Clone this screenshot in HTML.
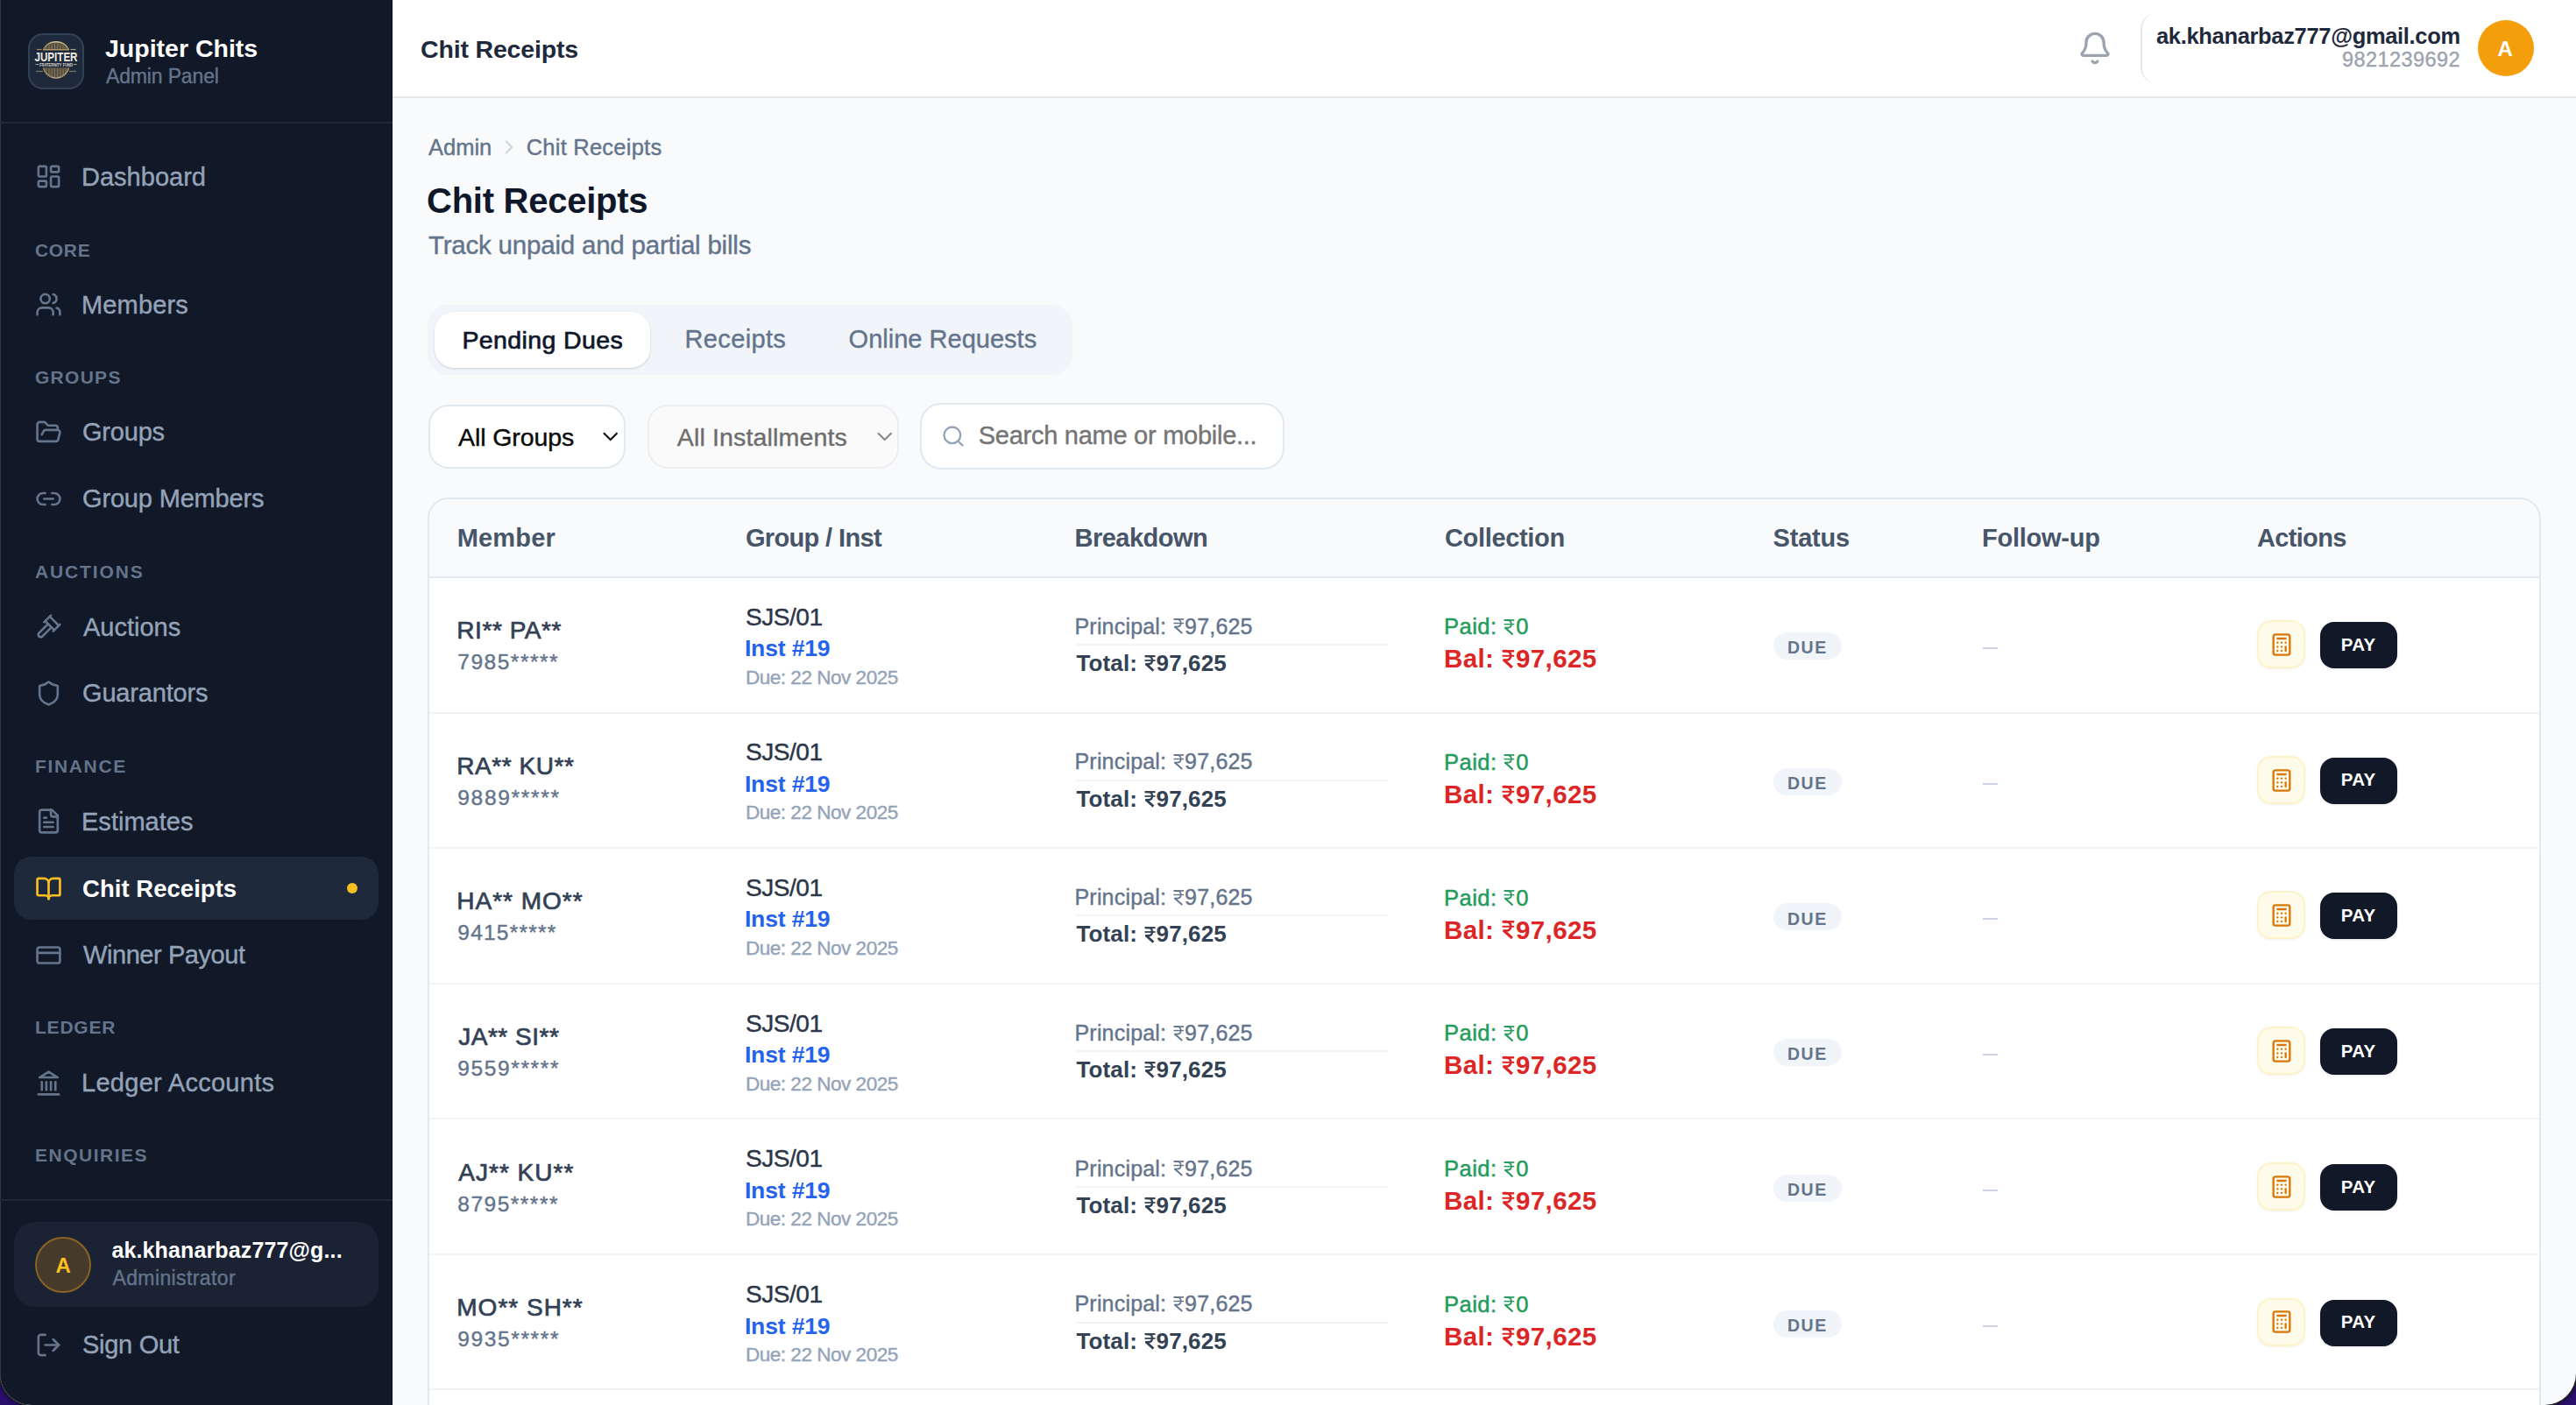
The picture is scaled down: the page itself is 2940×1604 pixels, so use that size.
<!DOCTYPE html><html><head><meta charset="utf-8"><title>Chit Receipts</title><style>

*{margin:0;padding:0;box-sizing:border-box}
html,body{width:2940px;height:1604px;overflow:hidden;background:#2a0f6b}
body{font-family:"Liberation Sans",sans-serif;position:relative}
.t{position:absolute;line-height:1;white-space:pre}
.rs{display:inline-block;width:0.5em;height:0.69em;vertical-align:0;margin:0 0.04em 0 0.01em;overflow:visible}

</style></head><body>
<div style="position:absolute;left:0;top:0;width:2940px;height:1604px;background:#2a0f6b"></div>
<div id="win" style="position:absolute;left:0;top:0;width:2940px;height:1604px;overflow:hidden;border-radius:0 0 36px 36px;background:#f8fafc;box-shadow:0 0 0 1.5px #222, 0 0 4px 2px rgba(0,0,0,0.55)">
<div style="position:absolute;left:0px;top:0px;width:448px;height:1604px;background:#111827"></div>
<div style="position:absolute;left:0px;top:0px;width:1px;height:1604px;background:#2f3748"></div>
<div style="position:absolute;left:447px;top:0px;width:1px;height:1604px;background:#0b1220"></div>
<div style="position:absolute;left:32px;top:38px;width:64px;height:64px;background:#1e293b;border:2px solid #334155;border-radius:17px"></div>
<svg style="position:absolute;left:32px;top:38px" width="64" height="64" viewBox="0 0 64 64">
<defs><linearGradient id="gd" x1="0" x2="1"><stop offset="0" stop-color="#a8824a"/><stop offset="0.5" stop-color="#e8d39c"/><stop offset="1" stop-color="#b39559"/></linearGradient></defs>
<g stroke="#a68b57" stroke-width="0.85" opacity="0.9"><line x1="18.95" y1="17.10" x2="18.95" y2="18.5"/><line x1="20.40" y1="15.43" x2="20.40" y2="18.5"/><line x1="21.85" y1="14.13" x2="21.85" y2="18.5"/><line x1="23.30" y1="13.11" x2="23.30" y2="18.5"/><line x1="24.75" y1="12.30" x2="24.75" y2="18.5"/><line x1="26.20" y1="11.66" x2="26.20" y2="18.5"/><line x1="27.65" y1="11.19" x2="27.65" y2="18.5"/><line x1="29.10" y1="10.86" x2="29.10" y2="18.5"/><line x1="30.55" y1="10.66" x2="30.55" y2="18.5"/><line x1="32.00" y1="10.60" x2="32.00" y2="18.5"/><line x1="33.45" y1="10.66" x2="33.45" y2="18.5"/><line x1="34.90" y1="10.86" x2="34.90" y2="18.5"/><line x1="36.35" y1="11.19" x2="36.35" y2="18.5"/><line x1="37.80" y1="11.66" x2="37.80" y2="18.5"/><line x1="39.25" y1="12.30" x2="39.25" y2="18.5"/><line x1="40.70" y1="13.11" x2="40.70" y2="18.5"/><line x1="42.15" y1="14.13" x2="42.15" y2="18.5"/><line x1="43.60" y1="15.43" x2="43.60" y2="18.5"/><line x1="45.05" y1="17.10" x2="45.05" y2="18.5"/><line x1="18.95" y1="39.3" x2="18.95" y2="42.25"/><line x1="20.40" y1="39.3" x2="20.40" y2="44.43"/><line x1="21.85" y1="39.3" x2="21.85" y2="45.99"/><line x1="23.30" y1="39.3" x2="23.30" y2="47.19"/><line x1="24.75" y1="39.3" x2="24.75" y2="48.11"/><line x1="26.20" y1="39.3" x2="26.20" y2="48.82"/><line x1="27.65" y1="39.3" x2="27.65" y2="49.35"/><line x1="29.10" y1="39.3" x2="29.10" y2="49.71"/><line x1="30.55" y1="39.3" x2="30.55" y2="49.93"/><line x1="32.00" y1="39.3" x2="32.00" y2="50.00"/><line x1="33.45" y1="39.3" x2="33.45" y2="49.93"/><line x1="34.90" y1="39.3" x2="34.90" y2="49.71"/><line x1="36.35" y1="39.3" x2="36.35" y2="49.35"/><line x1="37.80" y1="39.3" x2="37.80" y2="48.82"/><line x1="39.25" y1="39.3" x2="39.25" y2="48.11"/><line x1="40.70" y1="39.3" x2="40.70" y2="47.19"/><line x1="42.15" y1="39.3" x2="42.15" y2="45.99"/><line x1="43.60" y1="39.3" x2="43.60" y2="44.43"/><line x1="45.05" y1="39.3" x2="45.05" y2="42.25"/></g>
<path d="M17.5 18.5 A16.35 16.35 0 0 1 46.5 18.5" fill="none" stroke="url(#gd)" stroke-width="1.4"/>
<path d="M17.5 39.3 A14.86 14.86 0 0 0 46.5 39.3" fill="none" stroke="url(#gd)" stroke-width="1.4"/>
<line x1="10" y1="18.5" x2="15.5" y2="18.5" stroke="#b08a4e" stroke-width="1.2"/>
<line x1="17" y1="18.8" x2="47" y2="18.8" stroke="#c9ad6e" stroke-width="1.2"/>
<line x1="48.5" y1="18.5" x2="54.5" y2="18.5" stroke="#a9a68a" stroke-width="1.2"/>
<line x1="11.5" y1="39.3" x2="56.5" y2="39.3" stroke="url(#gd)" stroke-width="1.3"/>
<rect x="7" y="20.3" width="50" height="12.2" fill="#1e293b"/>
<text x="32" y="32" text-anchor="middle" font-family="Liberation Sans" font-weight="bold" font-size="15" fill="#f1ece2" textLength="49" lengthAdjust="spacingAndGlyphs">JUPITER</text>
<rect x="8" y="33.3" width="48" height="4.6" fill="#1e293b"/>
<line x1="8.5" y1="35.6" x2="12" y2="35.6" stroke="#cfc8bc" stroke-width="0.8"/><line x1="52" y1="35.6" x2="55.5" y2="35.6" stroke="#cfc8bc" stroke-width="0.8"/>
<text x="32" y="37.5" text-anchor="middle" font-family="Liberation Sans" font-weight="bold" font-size="4.8" fill="#dcd6cc" textLength="38" lengthAdjust="spacingAndGlyphs">FRATERNITY FUND</text>
<g fill="#77746c"><rect x="9" y="42.8" width="8" height="1.3"/><rect x="47" y="42.8" width="8" height="1.3"/></g>
<path d="M21 47.5 Q32 53 43 47.5" fill="none" stroke="#5c5f66" stroke-width="0.8"/>
</svg>
<div style="position:absolute;left:0px;top:139px;width:448px;height:2px;background:#1e293b"></div>
<div style="position:absolute;left:16px;top:978px;width:416px;height:72px;background:#1e293b;border-radius:20px"></div>
<svg style="position:absolute;left:39.6px;top:186.4px;" width="31" height="31" viewBox="0 0 24 24" fill="none" stroke="#64748b" stroke-width="2.05" stroke-linecap="round" stroke-linejoin="round"><rect width="7" height="9" x="3" y="3" rx="1"/><rect width="7" height="5" x="14" y="3" rx="1"/><rect width="7" height="9" x="14" y="12" rx="1"/><rect width="7" height="5" x="3" y="16" rx="1"/></svg>
<svg style="position:absolute;left:39.6px;top:332.3px;" width="31" height="31" viewBox="0 0 24 24" fill="none" stroke="#64748b" stroke-width="2.05" stroke-linecap="round" stroke-linejoin="round"><path d="M16 21v-2a4 4 0 0 0-4-4H6a4 4 0 0 0-4 4v2"/><circle cx="9" cy="7" r="4"/><path d="M22 21v-2a4 4 0 0 0-3-3.87"/><path d="M16 3.13a4 4 0 0 1 0 7.75"/></svg>
<svg style="position:absolute;left:39.6px;top:477.70000000000005px;" width="31" height="31" viewBox="0 0 24 24" fill="none" stroke="#64748b" stroke-width="2.05" stroke-linecap="round" stroke-linejoin="round"><path d="m6 14 1.5-2.9A2 2 0 0 1 9.24 10H20a2 2 0 0 1 1.94 2.5l-1.54 6a2 2 0 0 1-1.95 1.5H4a2 2 0 0 1-2-2V5a2 2 0 0 1 2-2h3.9a2 2 0 0 1 1.69.9l.81 1.2a2 2 0 0 0 1.67.9H18a2 2 0 0 1 2 2v2"/></svg>
<svg style="position:absolute;left:39.6px;top:554.1px;" width="31" height="31" viewBox="0 0 24 24" fill="none" stroke="#64748b" stroke-width="2.05" stroke-linecap="round" stroke-linejoin="round"><path d="M9 17H7A5 5 0 0 1 7 7h2"/><path d="M15 7h2a5 5 0 1 1 0 10h-2"/><line x1="8" x2="16" y1="12" y2="12"/></svg>
<svg style="position:absolute;left:39.6px;top:700.3000000000001px;" width="31" height="31" viewBox="0 0 24 24" fill="none" stroke="#64748b" stroke-width="2.05" stroke-linecap="round" stroke-linejoin="round"><path d="m14.5 12.5-8 8a2.119 2.119 0 1 1-3-3l8-8"/><path d="m16 16 6-6"/><path d="m8 8 6-6"/><path d="m9 7 8 8"/><path d="m21 11-8-8"/></svg>
<svg style="position:absolute;left:39.6px;top:776.1px;" width="31" height="31" viewBox="0 0 24 24" fill="none" stroke="#64748b" stroke-width="2.05" stroke-linecap="round" stroke-linejoin="round"><path d="M20 13c0 5-3.5 7.5-7.66 8.95a1 1 0 0 1-.67-.01C7.5 20.5 4 18 4 13V6a1 1 0 0 1 1-1c2 0 4.5-1.2 6.24-2.72a1.17 1.17 0 0 1 1.52 0C14.51 3.81 17 5 19 5a1 1 0 0 1 1 1z"/></svg>
<svg style="position:absolute;left:39.6px;top:922.3000000000001px;" width="31" height="31" viewBox="0 0 24 24" fill="none" stroke="#64748b" stroke-width="2.05" stroke-linecap="round" stroke-linejoin="round"><path d="M15 2H6a2 2 0 0 0-2 2v16a2 2 0 0 0 2 2h12a2 2 0 0 0 2-2V7Z"/><path d="M14 2v4a2 2 0 0 0 2 2h4"/><path d="M10 9H8"/><path d="M16 13H8"/><path d="M16 17H8"/></svg>
<svg style="position:absolute;left:39.6px;top:998.6px;" width="31" height="31" viewBox="0 0 24 24" fill="none" stroke="#fbbf24" stroke-width="2.05" stroke-linecap="round" stroke-linejoin="round"><path d="M12 7v14"/><path d="M3 18a1 1 0 0 1-1-1V4a1 1 0 0 1 1-1h5a4 4 0 0 1 4 4 4 4 0 0 1 4-4h5a1 1 0 0 1 1 1v13a1 1 0 0 1-1 1h-6a3 3 0 0 0-3 3 3 3 0 0 0-3-3z"/></svg>
<svg style="position:absolute;left:39.6px;top:1074.6px;" width="31" height="31" viewBox="0 0 24 24" fill="none" stroke="#64748b" stroke-width="2.05" stroke-linecap="round" stroke-linejoin="round"><rect width="20" height="14" x="2" y="5" rx="2"/><line x1="2" x2="22" y1="10" y2="10"/></svg>
<svg style="position:absolute;left:39.6px;top:1220.8999999999999px;" width="31" height="31" viewBox="0 0 24 24" fill="none" stroke="#64748b" stroke-width="2.05" stroke-linecap="round" stroke-linejoin="round"><line x1="3" x2="21" y1="22" y2="22"/><line x1="6" x2="6" y1="18" y2="11"/><line x1="10" x2="10" y1="18" y2="11"/><line x1="14" x2="14" y1="18" y2="11"/><line x1="18" x2="18" y1="18" y2="11"/><polygon points="12 2 20 7 4 7"/></svg>
<div style="position:absolute;left:395.9px;top:1007.7px;width:12.4px;height:12.4px;background:#f6bf22;border-radius:50%"></div>
<div style="position:absolute;left:0px;top:1369px;width:448px;height:2px;background:#1e293b"></div>
<div style="position:absolute;left:16px;top:1395px;width:416px;height:97px;background:#1a2233;border-radius:24px"></div>
<div style="position:absolute;left:40px;top:1412px;width:64px;height:64px;background:#463b2b;border:2px solid #8a6322;border-radius:50%"></div>
<svg style="position:absolute;left:39.6px;top:1519.8px;" width="31" height="31" viewBox="0 0 24 24" fill="none" stroke="#64748b" stroke-width="2.05" stroke-linecap="round" stroke-linejoin="round"><path d="M9 21H5a2 2 0 0 1-2-2V5a2 2 0 0 1 2-2h4"/><polyline points="16 17 21 12 16 7"/><line x1="21" x2="9" y1="12" y2="12"/></svg>
<div style="position:absolute;left:448px;top:0px;width:2492px;height:110px;background:#ffffff"></div>
<div style="position:absolute;left:448px;top:110px;width:2492px;height:2px;background:#e5e7eb"></div>
<svg style="position:absolute;left:2370.7px;top:35.3px;" width="40" height="40" viewBox="0 0 24 24" fill="none" stroke="#9ca3af" stroke-width="2" stroke-linecap="round" stroke-linejoin="round"><path d="M10.268 21a2 2 0 0 0 3.464 0"/><path d="M3.262 15.326A1 1 0 0 0 4 17h16a1 1 0 0 0 .74-1.673C19.41 13.956 18 12.499 18 8A6 6 0 0 0 6 8c0 4.499-1.411 5.956-2.738 7.326"/></svg>
<div style="position:absolute;left:2443px;top:15px;width:40px;height:80px;border-left:2px solid #e5e7eb;border-radius:18px 0 0 18px"></div>
<div style="position:absolute;left:2828px;top:23px;width:64px;height:64px;background:#f59e0b;border-radius:50%"></div>
<svg style="position:absolute;left:568px;top:155px;" width="26" height="26" viewBox="0 0 24 24" fill="none" stroke="#cbd5e1" stroke-width="2" stroke-linecap="round" stroke-linejoin="round"><path d="m9 18 6-6-6-6"/></svg>
<div style="position:absolute;left:488px;top:348px;width:736px;height:80px;background:#f1f5f9;border-radius:24px"></div>
<div style="position:absolute;left:496px;top:356px;width:246px;height:64px;background:#ffffff;border-radius:22px;box-shadow:0 1px 3px rgba(15,23,42,0.10),0 1px 2px rgba(15,23,42,0.06)"></div>
<div style="position:absolute;left:489px;top:462px;width:225px;height:72.5px;background:#ffffff;border:2px solid #e2e8f0;border-radius:23px"></div>
<svg style="position:absolute;left:686px;top:490px" width="21" height="17" viewBox="0 0 21 17"><path d="M2.9 4.2 10.7 12 18.5 4.2" fill="none" stroke="#111" stroke-width="2.2" stroke-linecap="butt" stroke-linejoin="miter"/></svg>
<div style="position:absolute;left:738.5px;top:462px;width:287.5px;height:72.5px;background:#fafafa;border:2px solid #eceef2;border-radius:23px"></div>
<svg style="position:absolute;left:999px;top:490px" width="21" height="17" viewBox="0 0 21 17"><path d="M2.9 4.2 10.7 12 18.5 4.2" fill="none" stroke="#8a8a8a" stroke-width="2.2" stroke-linecap="butt" stroke-linejoin="miter"/></svg>
<div style="position:absolute;left:1050px;top:460px;width:415.5px;height:75.5px;background:#ffffff;border:2px solid #e2e8f0;border-radius:24px"></div>
<svg style="position:absolute;left:1073.9px;top:483.9px;" width="28" height="28" viewBox="0 0 24 24" fill="none" stroke="#94a3b8" stroke-width="2" stroke-linecap="round" stroke-linejoin="round"><circle cx="11" cy="11" r="8"/><path d="m21 21-4.3-4.3"/></svg>
<div style="position:absolute;left:488px;top:568px;width:2412px;height:1200px;background:#ffffff;border:2px solid #e2e8f0;border-radius:24px"></div>
<div style="position:absolute;left:490px;top:570px;width:2408px;height:88px;background:#f8fafc;border-radius:22px 22px 0 0"></div>
<div style="position:absolute;left:490px;top:658px;width:2408px;height:2px;background:#e2e8f0"></div>
<div style="position:absolute;left:490px;top:967.4px;width:2408px;height:2px;background:#f1f5f9"></div>
<div style="position:absolute;left:1228px;top:735.0px;width:357px;height:2px;background:#f1f5f9"></div>
<div style="position:absolute;left:2024px;top:722.0px;width:78px;height:31px;background:#f1f5f9;border-radius:16px"></div>
<div style="position:absolute;left:2263px;top:739.0px;width:17px;height:2px;background:#cbd5e1"></div>
<div style="position:absolute;left:2576px;top:708.0px;width:55px;height:55px;background:#fffbeb;border:2px solid #fef3c7;border-radius:16px;box-shadow:0 1px 3px rgba(0,0,0,0.06)"></div>
<svg style="position:absolute;left:2590.1px;top:721.8px;" width="28" height="28" viewBox="0 0 24 24" fill="none" stroke="#d97706" stroke-width="2" stroke-linecap="round" stroke-linejoin="round"><rect width="16" height="20" x="4" y="2" rx="2"/><line x1="8" x2="16" y1="6" y2="6"/><line x1="16" x2="16" y1="14" y2="18"/><path d="M16 10h.01"/><path d="M12 10h.01"/><path d="M8 10h.01"/><path d="M12 14h.01"/><path d="M8 14h.01"/><path d="M12 18h.01"/><path d="M8 18h.01"/></svg>
<div style="position:absolute;left:2648px;top:710.0px;width:88px;height:53px;background:#111827;border-radius:16px;box-shadow:0 1px 3px rgba(0,0,0,0.1)"></div>
<div style="position:absolute;left:490px;top:1121.8px;width:2408px;height:2px;background:#f1f5f9"></div>
<div style="position:absolute;left:1228px;top:889.7px;width:357px;height:2px;background:#f1f5f9"></div>
<div style="position:absolute;left:2024px;top:876.7px;width:78px;height:31px;background:#f1f5f9;border-radius:16px"></div>
<div style="position:absolute;left:2263px;top:893.7px;width:17px;height:2px;background:#cbd5e1"></div>
<div style="position:absolute;left:2576px;top:862.7px;width:55px;height:55px;background:#fffbeb;border:2px solid #fef3c7;border-radius:16px;box-shadow:0 1px 3px rgba(0,0,0,0.06)"></div>
<svg style="position:absolute;left:2590.1px;top:876.5px;" width="28" height="28" viewBox="0 0 24 24" fill="none" stroke="#d97706" stroke-width="2" stroke-linecap="round" stroke-linejoin="round"><rect width="16" height="20" x="4" y="2" rx="2"/><line x1="8" x2="16" y1="6" y2="6"/><line x1="16" x2="16" y1="14" y2="18"/><path d="M16 10h.01"/><path d="M12 10h.01"/><path d="M8 10h.01"/><path d="M12 14h.01"/><path d="M8 14h.01"/><path d="M12 18h.01"/><path d="M8 18h.01"/></svg>
<div style="position:absolute;left:2648px;top:864.7px;width:88px;height:53px;background:#111827;border-radius:16px;box-shadow:0 1px 3px rgba(0,0,0,0.1)"></div>
<div style="position:absolute;left:490px;top:1276.2px;width:2408px;height:2px;background:#f1f5f9"></div>
<div style="position:absolute;left:1228px;top:1044.4px;width:357px;height:2px;background:#f1f5f9"></div>
<div style="position:absolute;left:2024px;top:1031.4px;width:78px;height:31px;background:#f1f5f9;border-radius:16px"></div>
<div style="position:absolute;left:2263px;top:1048.4px;width:17px;height:2px;background:#cbd5e1"></div>
<div style="position:absolute;left:2576px;top:1017.4px;width:55px;height:55px;background:#fffbeb;border:2px solid #fef3c7;border-radius:16px;box-shadow:0 1px 3px rgba(0,0,0,0.06)"></div>
<svg style="position:absolute;left:2590.1px;top:1031.2px;" width="28" height="28" viewBox="0 0 24 24" fill="none" stroke="#d97706" stroke-width="2" stroke-linecap="round" stroke-linejoin="round"><rect width="16" height="20" x="4" y="2" rx="2"/><line x1="8" x2="16" y1="6" y2="6"/><line x1="16" x2="16" y1="14" y2="18"/><path d="M16 10h.01"/><path d="M12 10h.01"/><path d="M8 10h.01"/><path d="M12 14h.01"/><path d="M8 14h.01"/><path d="M12 18h.01"/><path d="M8 18h.01"/></svg>
<div style="position:absolute;left:2648px;top:1019.4px;width:88px;height:53px;background:#111827;border-radius:16px;box-shadow:0 1px 3px rgba(0,0,0,0.1)"></div>
<div style="position:absolute;left:490px;top:1430.6px;width:2408px;height:2px;background:#f1f5f9"></div>
<div style="position:absolute;left:1228px;top:1199.2px;width:357px;height:2px;background:#f1f5f9"></div>
<div style="position:absolute;left:2024px;top:1186.2px;width:78px;height:31px;background:#f1f5f9;border-radius:16px"></div>
<div style="position:absolute;left:2263px;top:1203.2px;width:17px;height:2px;background:#cbd5e1"></div>
<div style="position:absolute;left:2576px;top:1172.2px;width:55px;height:55px;background:#fffbeb;border:2px solid #fef3c7;border-radius:16px;box-shadow:0 1px 3px rgba(0,0,0,0.06)"></div>
<svg style="position:absolute;left:2590.1px;top:1186.0px;" width="28" height="28" viewBox="0 0 24 24" fill="none" stroke="#d97706" stroke-width="2" stroke-linecap="round" stroke-linejoin="round"><rect width="16" height="20" x="4" y="2" rx="2"/><line x1="8" x2="16" y1="6" y2="6"/><line x1="16" x2="16" y1="14" y2="18"/><path d="M16 10h.01"/><path d="M12 10h.01"/><path d="M8 10h.01"/><path d="M12 14h.01"/><path d="M8 14h.01"/><path d="M12 18h.01"/><path d="M8 18h.01"/></svg>
<div style="position:absolute;left:2648px;top:1174.2px;width:88px;height:53px;background:#111827;border-radius:16px;box-shadow:0 1px 3px rgba(0,0,0,0.1)"></div>
<div style="position:absolute;left:490px;top:1585.0px;width:2408px;height:2px;background:#f1f5f9"></div>
<div style="position:absolute;left:1228px;top:1353.9px;width:357px;height:2px;background:#f1f5f9"></div>
<div style="position:absolute;left:2024px;top:1340.9px;width:78px;height:31px;background:#f1f5f9;border-radius:16px"></div>
<div style="position:absolute;left:2263px;top:1357.9px;width:17px;height:2px;background:#cbd5e1"></div>
<div style="position:absolute;left:2576px;top:1326.9px;width:55px;height:55px;background:#fffbeb;border:2px solid #fef3c7;border-radius:16px;box-shadow:0 1px 3px rgba(0,0,0,0.06)"></div>
<svg style="position:absolute;left:2590.1px;top:1340.7px;" width="28" height="28" viewBox="0 0 24 24" fill="none" stroke="#d97706" stroke-width="2" stroke-linecap="round" stroke-linejoin="round"><rect width="16" height="20" x="4" y="2" rx="2"/><line x1="8" x2="16" y1="6" y2="6"/><line x1="16" x2="16" y1="14" y2="18"/><path d="M16 10h.01"/><path d="M12 10h.01"/><path d="M8 10h.01"/><path d="M12 14h.01"/><path d="M8 14h.01"/><path d="M12 18h.01"/><path d="M8 18h.01"/></svg>
<div style="position:absolute;left:2648px;top:1328.9px;width:88px;height:53px;background:#111827;border-radius:16px;box-shadow:0 1px 3px rgba(0,0,0,0.1)"></div>
<div style="position:absolute;left:490px;top:1739.4px;width:2408px;height:2px;background:#f1f5f9"></div>
<div style="position:absolute;left:1228px;top:1508.6px;width:357px;height:2px;background:#f1f5f9"></div>
<div style="position:absolute;left:2024px;top:1495.6px;width:78px;height:31px;background:#f1f5f9;border-radius:16px"></div>
<div style="position:absolute;left:2263px;top:1512.6px;width:17px;height:2px;background:#cbd5e1"></div>
<div style="position:absolute;left:2576px;top:1481.6px;width:55px;height:55px;background:#fffbeb;border:2px solid #fef3c7;border-radius:16px;box-shadow:0 1px 3px rgba(0,0,0,0.06)"></div>
<svg style="position:absolute;left:2590.1px;top:1495.4px;" width="28" height="28" viewBox="0 0 24 24" fill="none" stroke="#d97706" stroke-width="2" stroke-linecap="round" stroke-linejoin="round"><rect width="16" height="20" x="4" y="2" rx="2"/><line x1="8" x2="16" y1="6" y2="6"/><line x1="16" x2="16" y1="14" y2="18"/><path d="M16 10h.01"/><path d="M12 10h.01"/><path d="M8 10h.01"/><path d="M12 14h.01"/><path d="M8 14h.01"/><path d="M12 18h.01"/><path d="M8 18h.01"/></svg>
<div style="position:absolute;left:2648px;top:1483.6px;width:88px;height:53px;background:#111827;border-radius:16px;box-shadow:0 1px 3px rgba(0,0,0,0.1)"></div>
<div style="position:absolute;left:490px;top:813px;width:2408px;height:2px;background:#f1f5f9"></div>
<div class="t" style="left:120.00px;top:40.78px;font-size:28.5px;font-weight:700;color:#ffffff;letter-spacing:0.000px;">Jupiter Chits</div>
<div class="t" style="left:121.00px;top:75.85px;font-size:23px;font-weight:400;color:#64748b;letter-spacing:-0.150px;-webkit-text-stroke:0.4px #64748b;">Admin Panel</div>
<div class="t" style="left:93.00px;top:187.65px;font-size:29px;font-weight:400;color:#94a3b8;letter-spacing:0.012px;-webkit-text-stroke:0.4px #94a3b8;">Dashboard</div>
<div class="t" style="left:40.00px;top:274.65px;font-size:21px;font-weight:700;color:#64748b;letter-spacing:0.667px;">CORE</div>
<div class="t" style="left:93.00px;top:333.55px;font-size:29px;font-weight:400;color:#94a3b8;letter-spacing:0.167px;-webkit-text-stroke:0.4px #94a3b8;">Members</div>
<div class="t" style="left:40.00px;top:420.15px;font-size:21px;font-weight:700;color:#64748b;letter-spacing:1.280px;">GROUPS</div>
<div class="t" style="left:94.00px;top:478.95px;font-size:29px;font-weight:400;color:#94a3b8;letter-spacing:-0.200px;-webkit-text-stroke:0.4px #94a3b8;">Groups</div>
<div class="t" style="left:94.00px;top:555.35px;font-size:29px;font-weight:400;color:#94a3b8;letter-spacing:-0.167px;-webkit-text-stroke:0.4px #94a3b8;">Group Members</div>
<div class="t" style="left:40.00px;top:642.15px;font-size:21px;font-weight:700;color:#64748b;letter-spacing:1.857px;">AUCTIONS</div>
<div class="t" style="left:95.00px;top:701.55px;font-size:29px;font-weight:400;color:#94a3b8;letter-spacing:0.000px;-webkit-text-stroke:0.4px #94a3b8;">Auctions</div>
<div class="t" style="left:94.00px;top:777.35px;font-size:29px;font-weight:400;color:#94a3b8;letter-spacing:-0.178px;-webkit-text-stroke:0.4px #94a3b8;">Guarantors</div>
<div class="t" style="left:40.00px;top:864.35px;font-size:21px;font-weight:700;color:#64748b;letter-spacing:1.650px;">FINANCE</div>
<div class="t" style="left:93.00px;top:923.55px;font-size:29px;font-weight:400;color:#94a3b8;letter-spacing:0.025px;-webkit-text-stroke:0.4px #94a3b8;">Estimates</div>
<div class="t" style="left:94.00px;top:1001.12px;font-size:27.5px;font-weight:700;color:#ffffff;letter-spacing:0.033px;">Chit Receipts</div>
<div class="t" style="left:95.00px;top:1075.85px;font-size:29px;font-weight:400;color:#94a3b8;letter-spacing:-0.433px;-webkit-text-stroke:0.4px #94a3b8;">Winner Payout</div>
<div class="t" style="left:40.00px;top:1162.25px;font-size:21px;font-weight:700;color:#64748b;letter-spacing:0.780px;">LEDGER</div>
<div class="t" style="left:93.00px;top:1222.15px;font-size:29px;font-weight:400;color:#94a3b8;letter-spacing:0.286px;-webkit-text-stroke:0.4px #94a3b8;">Ledger Accounts</div>
<div class="t" style="left:40.00px;top:1308.15px;font-size:21px;font-weight:700;color:#64748b;letter-spacing:1.500px;">ENQUIRIES</div>
<div class="t" style="left:63.50px;top:1432.60px;font-size:24px;font-weight:700;color:#fbbf24;letter-spacing:0.000px;">A</div>
<div class="t" style="left:127.40px;top:1414.75px;font-size:25px;font-weight:700;color:#ffffff;letter-spacing:0.137px;">ak.khanarbaz777@g...</div>
<div class="t" style="left:128.40px;top:1447.55px;font-size:23px;font-weight:400;color:#64748b;letter-spacing:0.400px;-webkit-text-stroke:0.4px #64748b;">Administrator</div>
<div class="t" style="left:94.00px;top:1521.05px;font-size:29px;font-weight:400;color:#94a3b8;letter-spacing:-0.286px;-webkit-text-stroke:0.4px #94a3b8;">Sign Out</div>
<div class="t" style="left:480.00px;top:41.78px;font-size:28.5px;font-weight:700;color:#1e293b;letter-spacing:-0.167px;">Chit Receipts</div>
<div class="t" style="left:2461.00px;top:28.72px;font-size:25.5px;font-weight:700;color:#1e293b;letter-spacing:-0.333px;">ak.khanarbaz777@gmail.com</div>
<div class="t" style="left:2673.00px;top:57.03px;font-size:23.5px;font-weight:400;color:#9ca3af;letter-spacing:0.444px;-webkit-text-stroke:0.4px #9ca3af;">9821239692</div>
<div class="t" style="left:2850.50px;top:43.70px;font-size:24px;font-weight:700;color:#ffffff;letter-spacing:0.000px;">A</div>
<div class="t" style="left:489.00px;top:155.52px;font-size:25.5px;font-weight:400;color:#64748b;letter-spacing:0.000px;-webkit-text-stroke:0.4px #64748b;">Admin</div>
<div class="t" style="left:600.70px;top:155.52px;font-size:25.5px;font-weight:400;color:#64748b;letter-spacing:0.233px;-webkit-text-stroke:0.4px #64748b;">Chit Receipts</div>
<div class="t" style="left:487.00px;top:209.20px;font-size:40px;font-weight:700;color:#0f172a;letter-spacing:-0.250px;">Chit Receipts</div>
<div class="t" style="left:489.00px;top:264.93px;font-size:29.5px;font-weight:400;color:#64748b;letter-spacing:-0.207px;-webkit-text-stroke:0.4px #64748b;">Track unpaid and partial bills</div>
<div class="t" style="left:527.40px;top:373.88px;font-size:28.5px;font-weight:400;color:#0f172a;letter-spacing:0.382px;-webkit-text-stroke:0.7px #0f172a;">Pending Dues</div>
<div class="t" style="left:781.50px;top:373.45px;font-size:29px;font-weight:400;color:#64748b;letter-spacing:0.357px;-webkit-text-stroke:0.4px #64748b;">Receipts</div>
<div class="t" style="left:968.60px;top:373.45px;font-size:29px;font-weight:400;color:#64748b;letter-spacing:0.014px;-webkit-text-stroke:0.4px #64748b;">Online Requests</div>
<div class="t" style="left:523.00px;top:485.17px;font-size:28.5px;font-weight:400;color:#0a0a0a;letter-spacing:-0.100px;-webkit-text-stroke:0.4px #0a0a0a;">All Groups</div>
<div class="t" style="left:772.80px;top:485.17px;font-size:28.5px;font-weight:400;color:#6d6d6d;letter-spacing:0.160px;-webkit-text-stroke:0.4px #6d6d6d;">All Installments</div>
<div class="t" style="left:1116.70px;top:483.35px;font-size:29px;font-weight:400;color:#757575;letter-spacing:-0.261px;-webkit-text-stroke:0.4px #757575;">Search name or mobile...</div>
<div class="t" style="left:521.70px;top:599.85px;font-size:29px;font-weight:700;color:#475569;letter-spacing:0.200px;">Member</div>
<div class="t" style="left:850.90px;top:599.85px;font-size:29px;font-weight:700;color:#475569;letter-spacing:-0.636px;">Group / Inst</div>
<div class="t" style="left:1226.50px;top:599.85px;font-size:29px;font-weight:700;color:#475569;letter-spacing:-0.500px;">Breakdown</div>
<div class="t" style="left:1649.00px;top:599.85px;font-size:29px;font-weight:700;color:#475569;letter-spacing:-0.333px;">Collection</div>
<div class="t" style="left:2023.60px;top:599.85px;font-size:29px;font-weight:700;color:#475569;letter-spacing:-0.200px;">Status</div>
<div class="t" style="left:2262.00px;top:599.85px;font-size:29px;font-weight:700;color:#475569;letter-spacing:-0.250px;">Follow-up</div>
<div class="t" style="left:2576.00px;top:599.85px;font-size:29px;font-weight:700;color:#475569;letter-spacing:-0.667px;">Actions</div>
<div class="t" style="left:521.30px;top:705.80px;font-size:28px;font-weight:400;color:#334155;letter-spacing:0.562px;-webkit-text-stroke:0.7px #334155;">RI** PA**</div>
<div class="t" style="left:522.30px;top:743.77px;font-size:24.5px;font-weight:400;color:#64748b;letter-spacing:1.513px;-webkit-text-stroke:0.4px #64748b;">7985*****</div>
<div class="t" style="left:850.90px;top:690.60px;font-size:28px;font-weight:400;color:#2b3648;letter-spacing:-0.440px;-webkit-text-stroke:0.4px #2b3648;">SJS/01</div>
<div class="t" style="left:849.90px;top:726.98px;font-size:26.5px;font-weight:700;color:#2563eb;letter-spacing:-0.143px;">Inst #19</div>
<div class="t" style="left:850.90px;top:762.58px;font-size:22.5px;font-weight:400;color:#94a3b8;letter-spacing:-0.467px;-webkit-text-stroke:0.4px #94a3b8;">Due: 22 Nov 2025</div>
<div class="t" style="left:1226.50px;top:702.65px;font-size:25px;font-weight:400;color:#64748b;letter-spacing:0.188px;-webkit-text-stroke:0.4px #64748b;">Principal: <svg class="rs" viewBox="0 0 56 72" preserveAspectRatio="none"><g fill="none" stroke="currentColor" stroke-linecap="butt"><path d="M2 4H54" stroke-width="7"/><path d="M2 23H54" stroke-width="6"/><path d="M6 4H19C31 4 39 12 39 22.5C39 33 31 40 19 40H5" stroke-width="7.5"/><path d="M8 39.5L46 71" stroke-width="8.5"/></g></svg>97,625</div>
<div class="t" style="left:1228.50px;top:744.00px;font-size:26px;font-weight:700;color:#334155;letter-spacing:0.108px;">Total: <svg class="rs" viewBox="0 0 56 72" preserveAspectRatio="none"><g fill="none" stroke="currentColor" stroke-linecap="butt"><path d="M2 4.5H54" stroke-width="8.5"/><path d="M2 24H54" stroke-width="7"/><path d="M6 4.5H19C31 4.5 39 12 39 23C39 34 31 41 19 41H5" stroke-width="10"/><path d="M8 40L45 71" stroke-width="12"/></g></svg>97,625</div>
<div class="t" style="left:1648.00px;top:703.33px;font-size:25.5px;font-weight:400;color:#259b5d;letter-spacing:0.500px;-webkit-text-stroke:0.5px #259b5d;">Paid: <svg class="rs" viewBox="0 0 56 72" preserveAspectRatio="none"><g fill="none" stroke="currentColor" stroke-linecap="butt"><path d="M2 4H54" stroke-width="7"/><path d="M2 23H54" stroke-width="6"/><path d="M6 4H19C31 4 39 12 39 22.5C39 33 31 40 19 40H5" stroke-width="7.5"/><path d="M8 39.5L46 71" stroke-width="8.5"/></g></svg>0</div>
<div class="t" style="left:1648.00px;top:737.32px;font-size:29.5px;font-weight:700;color:#dc2626;letter-spacing:0.373px;">Bal: <svg class="rs" viewBox="0 0 56 72" preserveAspectRatio="none"><g fill="none" stroke="currentColor" stroke-linecap="butt"><path d="M2 4.5H54" stroke-width="8.5"/><path d="M2 24H54" stroke-width="7"/><path d="M6 4.5H19C31 4.5 39 12 39 23C39 34 31 41 19 41H5" stroke-width="10"/><path d="M8 40L45 71" stroke-width="12"/></g></svg>97,625</div>
<div class="t" style="left:2040.00px;top:730.12px;font-size:19.5px;font-weight:700;color:#64748b;letter-spacing:1.500px;">DUE</div>
<div class="t" style="left:2671.80px;top:725.68px;font-size:20.5px;font-weight:700;color:#ffffff;letter-spacing:0.300px;">PAY</div>
<div class="t" style="left:521.30px;top:860.52px;font-size:28px;font-weight:400;color:#334155;letter-spacing:0.562px;-webkit-text-stroke:0.7px #334155;">RA** KU**</div>
<div class="t" style="left:522.30px;top:898.50px;font-size:24.5px;font-weight:400;color:#64748b;letter-spacing:1.688px;-webkit-text-stroke:0.4px #64748b;">9889*****</div>
<div class="t" style="left:850.90px;top:845.32px;font-size:28px;font-weight:400;color:#2b3648;letter-spacing:-0.440px;-webkit-text-stroke:0.4px #2b3648;">SJS/01</div>
<div class="t" style="left:849.90px;top:881.70px;font-size:26.5px;font-weight:700;color:#2563eb;letter-spacing:-0.143px;">Inst #19</div>
<div class="t" style="left:850.90px;top:917.30px;font-size:22.5px;font-weight:400;color:#94a3b8;letter-spacing:-0.467px;-webkit-text-stroke:0.4px #94a3b8;">Due: 22 Nov 2025</div>
<div class="t" style="left:1226.50px;top:857.37px;font-size:25px;font-weight:400;color:#64748b;letter-spacing:0.188px;-webkit-text-stroke:0.4px #64748b;">Principal: <svg class="rs" viewBox="0 0 56 72" preserveAspectRatio="none"><g fill="none" stroke="currentColor" stroke-linecap="butt"><path d="M2 4H54" stroke-width="7"/><path d="M2 23H54" stroke-width="6"/><path d="M6 4H19C31 4 39 12 39 22.5C39 33 31 40 19 40H5" stroke-width="7.5"/><path d="M8 39.5L46 71" stroke-width="8.5"/></g></svg>97,625</div>
<div class="t" style="left:1228.50px;top:898.72px;font-size:26px;font-weight:700;color:#334155;letter-spacing:0.108px;">Total: <svg class="rs" viewBox="0 0 56 72" preserveAspectRatio="none"><g fill="none" stroke="currentColor" stroke-linecap="butt"><path d="M2 4.5H54" stroke-width="8.5"/><path d="M2 24H54" stroke-width="7"/><path d="M6 4.5H19C31 4.5 39 12 39 23C39 34 31 41 19 41H5" stroke-width="10"/><path d="M8 40L45 71" stroke-width="12"/></g></svg>97,625</div>
<div class="t" style="left:1648.00px;top:858.05px;font-size:25.5px;font-weight:400;color:#259b5d;letter-spacing:0.500px;-webkit-text-stroke:0.5px #259b5d;">Paid: <svg class="rs" viewBox="0 0 56 72" preserveAspectRatio="none"><g fill="none" stroke="currentColor" stroke-linecap="butt"><path d="M2 4H54" stroke-width="7"/><path d="M2 23H54" stroke-width="6"/><path d="M6 4H19C31 4 39 12 39 22.5C39 33 31 40 19 40H5" stroke-width="7.5"/><path d="M8 39.5L46 71" stroke-width="8.5"/></g></svg>0</div>
<div class="t" style="left:1648.00px;top:892.04px;font-size:29.5px;font-weight:700;color:#dc2626;letter-spacing:0.373px;">Bal: <svg class="rs" viewBox="0 0 56 72" preserveAspectRatio="none"><g fill="none" stroke="currentColor" stroke-linecap="butt"><path d="M2 4.5H54" stroke-width="8.5"/><path d="M2 24H54" stroke-width="7"/><path d="M6 4.5H19C31 4.5 39 12 39 23C39 34 31 41 19 41H5" stroke-width="10"/><path d="M8 40L45 71" stroke-width="12"/></g></svg>97,625</div>
<div class="t" style="left:2040.00px;top:884.85px;font-size:19.5px;font-weight:700;color:#64748b;letter-spacing:1.500px;">DUE</div>
<div class="t" style="left:2671.80px;top:880.40px;font-size:20.5px;font-weight:700;color:#ffffff;letter-spacing:0.300px;">PAY</div>
<div class="t" style="left:521.30px;top:1015.24px;font-size:28px;font-weight:400;color:#334155;letter-spacing:1.000px;-webkit-text-stroke:0.7px #334155;">HA** MO**</div>
<div class="t" style="left:522.30px;top:1053.21px;font-size:24.5px;font-weight:400;color:#64748b;letter-spacing:1.225px;-webkit-text-stroke:0.4px #64748b;">9415*****</div>
<div class="t" style="left:850.90px;top:1000.04px;font-size:28px;font-weight:400;color:#2b3648;letter-spacing:-0.440px;-webkit-text-stroke:0.4px #2b3648;">SJS/01</div>
<div class="t" style="left:849.90px;top:1036.41px;font-size:26.5px;font-weight:700;color:#2563eb;letter-spacing:-0.143px;">Inst #19</div>
<div class="t" style="left:850.90px;top:1072.02px;font-size:22.5px;font-weight:400;color:#94a3b8;letter-spacing:-0.467px;-webkit-text-stroke:0.4px #94a3b8;">Due: 22 Nov 2025</div>
<div class="t" style="left:1226.50px;top:1012.09px;font-size:25px;font-weight:400;color:#64748b;letter-spacing:0.188px;-webkit-text-stroke:0.4px #64748b;">Principal: <svg class="rs" viewBox="0 0 56 72" preserveAspectRatio="none"><g fill="none" stroke="currentColor" stroke-linecap="butt"><path d="M2 4H54" stroke-width="7"/><path d="M2 23H54" stroke-width="6"/><path d="M6 4H19C31 4 39 12 39 22.5C39 33 31 40 19 40H5" stroke-width="7.5"/><path d="M8 39.5L46 71" stroke-width="8.5"/></g></svg>97,625</div>
<div class="t" style="left:1228.50px;top:1053.44px;font-size:26px;font-weight:700;color:#334155;letter-spacing:0.108px;">Total: <svg class="rs" viewBox="0 0 56 72" preserveAspectRatio="none"><g fill="none" stroke="currentColor" stroke-linecap="butt"><path d="M2 4.5H54" stroke-width="8.5"/><path d="M2 24H54" stroke-width="7"/><path d="M6 4.5H19C31 4.5 39 12 39 23C39 34 31 41 19 41H5" stroke-width="10"/><path d="M8 40L45 71" stroke-width="12"/></g></svg>97,625</div>
<div class="t" style="left:1648.00px;top:1012.77px;font-size:25.5px;font-weight:400;color:#259b5d;letter-spacing:0.500px;-webkit-text-stroke:0.5px #259b5d;">Paid: <svg class="rs" viewBox="0 0 56 72" preserveAspectRatio="none"><g fill="none" stroke="currentColor" stroke-linecap="butt"><path d="M2 4H54" stroke-width="7"/><path d="M2 23H54" stroke-width="6"/><path d="M6 4H19C31 4 39 12 39 22.5C39 33 31 40 19 40H5" stroke-width="7.5"/><path d="M8 39.5L46 71" stroke-width="8.5"/></g></svg>0</div>
<div class="t" style="left:1648.00px;top:1046.76px;font-size:29.5px;font-weight:700;color:#dc2626;letter-spacing:0.373px;">Bal: <svg class="rs" viewBox="0 0 56 72" preserveAspectRatio="none"><g fill="none" stroke="currentColor" stroke-linecap="butt"><path d="M2 4.5H54" stroke-width="8.5"/><path d="M2 24H54" stroke-width="7"/><path d="M6 4.5H19C31 4.5 39 12 39 23C39 34 31 41 19 41H5" stroke-width="10"/><path d="M8 40L45 71" stroke-width="12"/></g></svg>97,625</div>
<div class="t" style="left:2040.00px;top:1039.57px;font-size:19.5px;font-weight:700;color:#64748b;letter-spacing:1.500px;">DUE</div>
<div class="t" style="left:2671.80px;top:1035.12px;font-size:20.5px;font-weight:700;color:#ffffff;letter-spacing:0.300px;">PAY</div>
<div class="t" style="left:523.30px;top:1169.96px;font-size:28px;font-weight:400;color:#334155;letter-spacing:0.500px;-webkit-text-stroke:0.7px #334155;">JA** SI**</div>
<div class="t" style="left:522.30px;top:1207.93px;font-size:24.5px;font-weight:400;color:#64748b;letter-spacing:1.625px;-webkit-text-stroke:0.4px #64748b;">9559*****</div>
<div class="t" style="left:850.90px;top:1154.76px;font-size:28px;font-weight:400;color:#2b3648;letter-spacing:-0.440px;-webkit-text-stroke:0.4px #2b3648;">SJS/01</div>
<div class="t" style="left:849.90px;top:1191.13px;font-size:26.5px;font-weight:700;color:#2563eb;letter-spacing:-0.143px;">Inst #19</div>
<div class="t" style="left:850.90px;top:1226.74px;font-size:22.5px;font-weight:400;color:#94a3b8;letter-spacing:-0.467px;-webkit-text-stroke:0.4px #94a3b8;">Due: 22 Nov 2025</div>
<div class="t" style="left:1226.50px;top:1166.81px;font-size:25px;font-weight:400;color:#64748b;letter-spacing:0.188px;-webkit-text-stroke:0.4px #64748b;">Principal: <svg class="rs" viewBox="0 0 56 72" preserveAspectRatio="none"><g fill="none" stroke="currentColor" stroke-linecap="butt"><path d="M2 4H54" stroke-width="7"/><path d="M2 23H54" stroke-width="6"/><path d="M6 4H19C31 4 39 12 39 22.5C39 33 31 40 19 40H5" stroke-width="7.5"/><path d="M8 39.5L46 71" stroke-width="8.5"/></g></svg>97,625</div>
<div class="t" style="left:1228.50px;top:1208.16px;font-size:26px;font-weight:700;color:#334155;letter-spacing:0.108px;">Total: <svg class="rs" viewBox="0 0 56 72" preserveAspectRatio="none"><g fill="none" stroke="currentColor" stroke-linecap="butt"><path d="M2 4.5H54" stroke-width="8.5"/><path d="M2 24H54" stroke-width="7"/><path d="M6 4.5H19C31 4.5 39 12 39 23C39 34 31 41 19 41H5" stroke-width="10"/><path d="M8 40L45 71" stroke-width="12"/></g></svg>97,625</div>
<div class="t" style="left:1648.00px;top:1167.48px;font-size:25.5px;font-weight:400;color:#259b5d;letter-spacing:0.500px;-webkit-text-stroke:0.5px #259b5d;">Paid: <svg class="rs" viewBox="0 0 56 72" preserveAspectRatio="none"><g fill="none" stroke="currentColor" stroke-linecap="butt"><path d="M2 4H54" stroke-width="7"/><path d="M2 23H54" stroke-width="6"/><path d="M6 4H19C31 4 39 12 39 22.5C39 33 31 40 19 40H5" stroke-width="7.5"/><path d="M8 39.5L46 71" stroke-width="8.5"/></g></svg>0</div>
<div class="t" style="left:1648.00px;top:1201.48px;font-size:29.5px;font-weight:700;color:#dc2626;letter-spacing:0.373px;">Bal: <svg class="rs" viewBox="0 0 56 72" preserveAspectRatio="none"><g fill="none" stroke="currentColor" stroke-linecap="butt"><path d="M2 4.5H54" stroke-width="8.5"/><path d="M2 24H54" stroke-width="7"/><path d="M6 4.5H19C31 4.5 39 12 39 23C39 34 31 41 19 41H5" stroke-width="10"/><path d="M8 40L45 71" stroke-width="12"/></g></svg>97,625</div>
<div class="t" style="left:2040.00px;top:1194.29px;font-size:19.5px;font-weight:700;color:#64748b;letter-spacing:1.500px;">DUE</div>
<div class="t" style="left:2671.80px;top:1189.84px;font-size:20.5px;font-weight:700;color:#ffffff;letter-spacing:0.300px;">PAY</div>
<div class="t" style="left:523.30px;top:1324.68px;font-size:28px;font-weight:400;color:#334155;letter-spacing:1.012px;-webkit-text-stroke:0.7px #334155;">AJ** KU**</div>
<div class="t" style="left:522.30px;top:1362.65px;font-size:24.5px;font-weight:400;color:#64748b;letter-spacing:1.500px;-webkit-text-stroke:0.4px #64748b;">8795*****</div>
<div class="t" style="left:850.90px;top:1309.48px;font-size:28px;font-weight:400;color:#2b3648;letter-spacing:-0.440px;-webkit-text-stroke:0.4px #2b3648;">SJS/01</div>
<div class="t" style="left:849.90px;top:1345.86px;font-size:26.5px;font-weight:700;color:#2563eb;letter-spacing:-0.143px;">Inst #19</div>
<div class="t" style="left:850.90px;top:1381.45px;font-size:22.5px;font-weight:400;color:#94a3b8;letter-spacing:-0.467px;-webkit-text-stroke:0.4px #94a3b8;">Due: 22 Nov 2025</div>
<div class="t" style="left:1226.50px;top:1321.53px;font-size:25px;font-weight:400;color:#64748b;letter-spacing:0.188px;-webkit-text-stroke:0.4px #64748b;">Principal: <svg class="rs" viewBox="0 0 56 72" preserveAspectRatio="none"><g fill="none" stroke="currentColor" stroke-linecap="butt"><path d="M2 4H54" stroke-width="7"/><path d="M2 23H54" stroke-width="6"/><path d="M6 4H19C31 4 39 12 39 22.5C39 33 31 40 19 40H5" stroke-width="7.5"/><path d="M8 39.5L46 71" stroke-width="8.5"/></g></svg>97,625</div>
<div class="t" style="left:1228.50px;top:1362.88px;font-size:26px;font-weight:700;color:#334155;letter-spacing:0.108px;">Total: <svg class="rs" viewBox="0 0 56 72" preserveAspectRatio="none"><g fill="none" stroke="currentColor" stroke-linecap="butt"><path d="M2 4.5H54" stroke-width="8.5"/><path d="M2 24H54" stroke-width="7"/><path d="M6 4.5H19C31 4.5 39 12 39 23C39 34 31 41 19 41H5" stroke-width="10"/><path d="M8 40L45 71" stroke-width="12"/></g></svg>97,625</div>
<div class="t" style="left:1648.00px;top:1322.21px;font-size:25.5px;font-weight:400;color:#259b5d;letter-spacing:0.500px;-webkit-text-stroke:0.5px #259b5d;">Paid: <svg class="rs" viewBox="0 0 56 72" preserveAspectRatio="none"><g fill="none" stroke="currentColor" stroke-linecap="butt"><path d="M2 4H54" stroke-width="7"/><path d="M2 23H54" stroke-width="6"/><path d="M6 4H19C31 4 39 12 39 22.5C39 33 31 40 19 40H5" stroke-width="7.5"/><path d="M8 39.5L46 71" stroke-width="8.5"/></g></svg>0</div>
<div class="t" style="left:1648.00px;top:1356.20px;font-size:29.5px;font-weight:700;color:#dc2626;letter-spacing:0.373px;">Bal: <svg class="rs" viewBox="0 0 56 72" preserveAspectRatio="none"><g fill="none" stroke="currentColor" stroke-linecap="butt"><path d="M2 4.5H54" stroke-width="8.5"/><path d="M2 24H54" stroke-width="7"/><path d="M6 4.5H19C31 4.5 39 12 39 23C39 34 31 41 19 41H5" stroke-width="10"/><path d="M8 40L45 71" stroke-width="12"/></g></svg>97,625</div>
<div class="t" style="left:2040.00px;top:1349.00px;font-size:19.5px;font-weight:700;color:#64748b;letter-spacing:1.500px;">DUE</div>
<div class="t" style="left:2671.80px;top:1344.56px;font-size:20.5px;font-weight:700;color:#ffffff;letter-spacing:0.300px;">PAY</div>
<div class="t" style="left:521.30px;top:1479.40px;font-size:28px;font-weight:400;color:#334155;letter-spacing:1.000px;-webkit-text-stroke:0.7px #334155;">MO** SH**</div>
<div class="t" style="left:522.30px;top:1517.38px;font-size:24.5px;font-weight:400;color:#64748b;letter-spacing:1.625px;-webkit-text-stroke:0.4px #64748b;">9935*****</div>
<div class="t" style="left:850.90px;top:1464.20px;font-size:28px;font-weight:400;color:#2b3648;letter-spacing:-0.440px;-webkit-text-stroke:0.4px #2b3648;">SJS/01</div>
<div class="t" style="left:849.90px;top:1500.57px;font-size:26.5px;font-weight:700;color:#2563eb;letter-spacing:-0.143px;">Inst #19</div>
<div class="t" style="left:850.90px;top:1536.18px;font-size:22.5px;font-weight:400;color:#94a3b8;letter-spacing:-0.467px;-webkit-text-stroke:0.4px #94a3b8;">Due: 22 Nov 2025</div>
<div class="t" style="left:1226.50px;top:1476.25px;font-size:25px;font-weight:400;color:#64748b;letter-spacing:0.188px;-webkit-text-stroke:0.4px #64748b;">Principal: <svg class="rs" viewBox="0 0 56 72" preserveAspectRatio="none"><g fill="none" stroke="currentColor" stroke-linecap="butt"><path d="M2 4H54" stroke-width="7"/><path d="M2 23H54" stroke-width="6"/><path d="M6 4H19C31 4 39 12 39 22.5C39 33 31 40 19 40H5" stroke-width="7.5"/><path d="M8 39.5L46 71" stroke-width="8.5"/></g></svg>97,625</div>
<div class="t" style="left:1228.50px;top:1517.60px;font-size:26px;font-weight:700;color:#334155;letter-spacing:0.108px;">Total: <svg class="rs" viewBox="0 0 56 72" preserveAspectRatio="none"><g fill="none" stroke="currentColor" stroke-linecap="butt"><path d="M2 4.5H54" stroke-width="8.5"/><path d="M2 24H54" stroke-width="7"/><path d="M6 4.5H19C31 4.5 39 12 39 23C39 34 31 41 19 41H5" stroke-width="10"/><path d="M8 40L45 71" stroke-width="12"/></g></svg>97,625</div>
<div class="t" style="left:1648.00px;top:1476.92px;font-size:25.5px;font-weight:400;color:#259b5d;letter-spacing:0.500px;-webkit-text-stroke:0.5px #259b5d;">Paid: <svg class="rs" viewBox="0 0 56 72" preserveAspectRatio="none"><g fill="none" stroke="currentColor" stroke-linecap="butt"><path d="M2 4H54" stroke-width="7"/><path d="M2 23H54" stroke-width="6"/><path d="M6 4H19C31 4 39 12 39 22.5C39 33 31 40 19 40H5" stroke-width="7.5"/><path d="M8 39.5L46 71" stroke-width="8.5"/></g></svg>0</div>
<div class="t" style="left:1648.00px;top:1510.92px;font-size:29.5px;font-weight:700;color:#dc2626;letter-spacing:0.373px;">Bal: <svg class="rs" viewBox="0 0 56 72" preserveAspectRatio="none"><g fill="none" stroke="currentColor" stroke-linecap="butt"><path d="M2 4.5H54" stroke-width="8.5"/><path d="M2 24H54" stroke-width="7"/><path d="M6 4.5H19C31 4.5 39 12 39 23C39 34 31 41 19 41H5" stroke-width="10"/><path d="M8 40L45 71" stroke-width="12"/></g></svg>97,625</div>
<div class="t" style="left:2040.00px;top:1503.73px;font-size:19.5px;font-weight:700;color:#64748b;letter-spacing:1.500px;">DUE</div>
<div class="t" style="left:2671.80px;top:1499.28px;font-size:20.5px;font-weight:700;color:#ffffff;letter-spacing:0.300px;">PAY</div>
</div>
</body></html>
